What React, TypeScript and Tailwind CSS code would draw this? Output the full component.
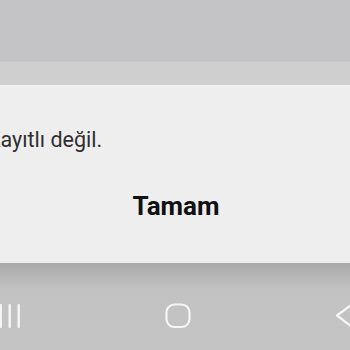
const NavBars = () => (
  <svg width="24" height="26" viewBox="0 0 24 26" className="ml-[-2px]">
    <rect x="1.5" y="1" width="2.4" height="24" rx="1" fill="#f6f6f6" />
    <rect x="10.5" y="1" width="2.4" height="24" rx="1" fill="#f6f6f6" />
    <rect x="19.5" y="1" width="2.4" height="24" rx="1" fill="#f6f6f6" />
  </svg>
)

const NavHome = () => (
  <svg width="27" height="26" viewBox="0 0 27 26">
    <rect x="1.5" y="1.5" width="23" height="22.5" rx="8" fill="none" stroke="#f6f6f6" strokeWidth="2.2" />
  </svg>
)

const NavBack = () => (
  <svg width="18" height="26" viewBox="0 0 18 26" className="mr-[-2px]">
    <path d="M17 2 L3 12.5 L17 23" fill="none" stroke="#f6f6f6" strokeWidth="2.2" strokeLinecap="round" strokeLinejoin="round" />
  </svg>
)

export default function App() {
  return (
    <div className="w-[350px] h-[350px] flex flex-col overflow-hidden bg-[#c4c4c6] font-['Roboto',sans-serif]">
      {/* dimmed app behind the dialog */}
      <div className="h-[61px] bg-[#c4c4c6]" />
      <div className="h-[24px] bg-[#cfcfcf] border-t border-[#c9c9c9]" />

      {/* dialog */}
      <div className="h-[178px] bg-[#eeeeee] border-t border-[#f3f3f3] flex flex-col pt-[40px]">
        <p className="ml-[-13px] text-[21.5px] leading-[28px] text-[#2e2e2e] whitespace-nowrap">
          Kayıtlı değil.
        </p>
        <div className="mt-[37px] flex justify-center">
          <span className="text-[26px] leading-[30px] font-bold text-[#111111] ml-[2px]">
            Tamam
          </span>
        </div>
      </div>

      {/* navigation bar */}
      <div className="flex-1 bg-gradient-to-b from-[#a9a9a9] via-[#c2c2c2] via-30% to-[#c4c4c4] flex items-center justify-between pt-[39px] pb-[20px]">
        <NavBars />
        <NavHome />
        <NavBack />
      </div>
    </div>
  )
}
